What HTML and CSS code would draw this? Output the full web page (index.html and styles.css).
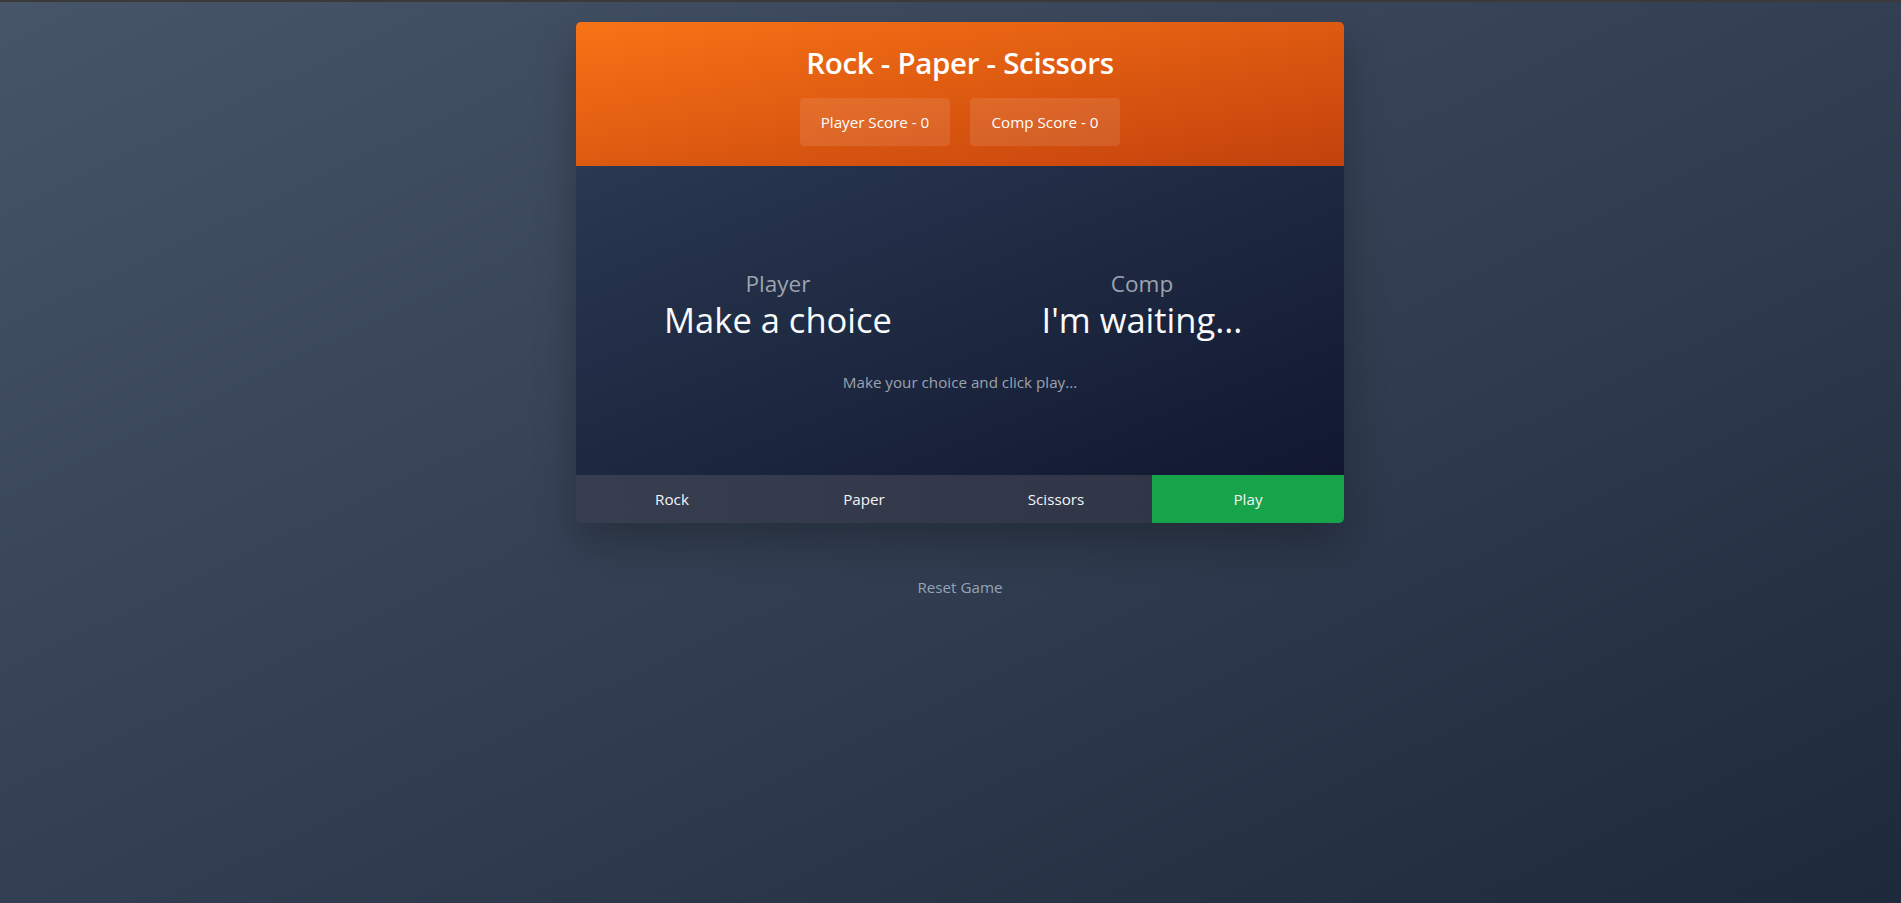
FILE: index.html
```html
<!DOCTYPE html>
<html lang="en">
<head>
<meta charset="utf-8">
<title>Rock - Paper - Scissors</title>
<link rel="stylesheet" href="styles.css">
</head>
<body>
<div class="page">
  <div class="card">
    <header class="header">
      <h1 class="title">Rock - Paper - Scissors</h1>
      <div class="scores">
        <div class="score">Player Score - 0</div>
        <div class="score">Comp Score - 0</div>
      </div>
    </header>
    <main class="arena">
      <div class="sides">
        <div class="side">
          <div class="side-label">Player</div>
          <div class="side-choice">Make a choice</div>
        </div>
        <div class="side">
          <div class="side-label">Comp</div>
          <div class="side-choice">I'm waiting...</div>
        </div>
      </div>
      <p class="message">Make your choice and click play...</p>
    </main>
    <div class="controls">
      <button class="btn">Rock</button>
      <button class="btn">Paper</button>
      <button class="btn">Scissors</button>
      <button class="btn btn-play">Play</button>
    </div>
  </div>
  <button class="reset">Reset Game</button>
</div>
</body>
</html>
```
FILE: styles.css
```css
html, body {
  margin: 0;
  height: 100%;
}
body {
  font-family: "Open Sans", "Noto Sans", sans-serif;
  background: linear-gradient(to bottom right, #475569, #1e293b);
  border-top: 2px solid #3a3a3a;
  box-sizing: border-box;
  color: #fff;
  overflow: hidden;
}
.page {
  display: flex;
  flex-direction: column;
  align-items: center;
  padding: 20px 0 0 19px;
}
.card {
  width: 768px;
  border-radius: 5px;
  overflow: hidden;
  box-shadow: 0 20px 40px rgba(0, 0, 0, 0.25);
}
.header {
  background: linear-gradient(to bottom right, #f97316, #c2410c);
  padding: 22px 0 20px;
  text-align: center;
}
.title {
  margin: 0;
  font-size: 29.5px;
  line-height: 37px;
  font-weight: 600;
  letter-spacing: -0.01em;
}
.scores {
  margin-top: 17px;
  display: flex;
  justify-content: center;
  gap: 20px;
}
.score {
  width: 150px;
  box-sizing: border-box;
  padding: 12px 0;
  font-size: 15.2px;
  line-height: 24px;
  background: rgba(255, 255, 255, 0.1);
  border-radius: 4px;
}
.arena {
  background: linear-gradient(to bottom right, #2a3851, #111830);
  padding: 102px 20px 81px;
  text-align: center;
}
.sides {
  display: grid;
  grid-template-columns: 1fr 1fr;
}
.side-label {
  font-size: 22.5px;
  line-height: 32px;
  color: #9ca3af;
}
.side-choice {
  font-size: 34.5px;
  line-height: 40px;
  color: #f9fafb;
}
.message {
  margin: 30px 0 0;
  font-size: 15.2px;
  line-height: 24px;
  color: #9ca3af;
}
.controls {
  display: grid;
  grid-template-columns: repeat(4, 1fr);
  background: linear-gradient(to right, #373e50, #2e3345);
}
.btn {
  height: 48px;
  border: 0;
  background: transparent;
  color: #f3f4f6;
  font-family: inherit;
  font-size: 15.2px;
  padding: 0;
}
.btn-play {
  background: #16a34a;
}
.reset {
  margin-top: 52px;
  border: 0;
  background: transparent;
  padding: 0;
  font-family: inherit;
  font-size: 15.2px;
  line-height: 24px;
  color: #94a3b8;
}
```
